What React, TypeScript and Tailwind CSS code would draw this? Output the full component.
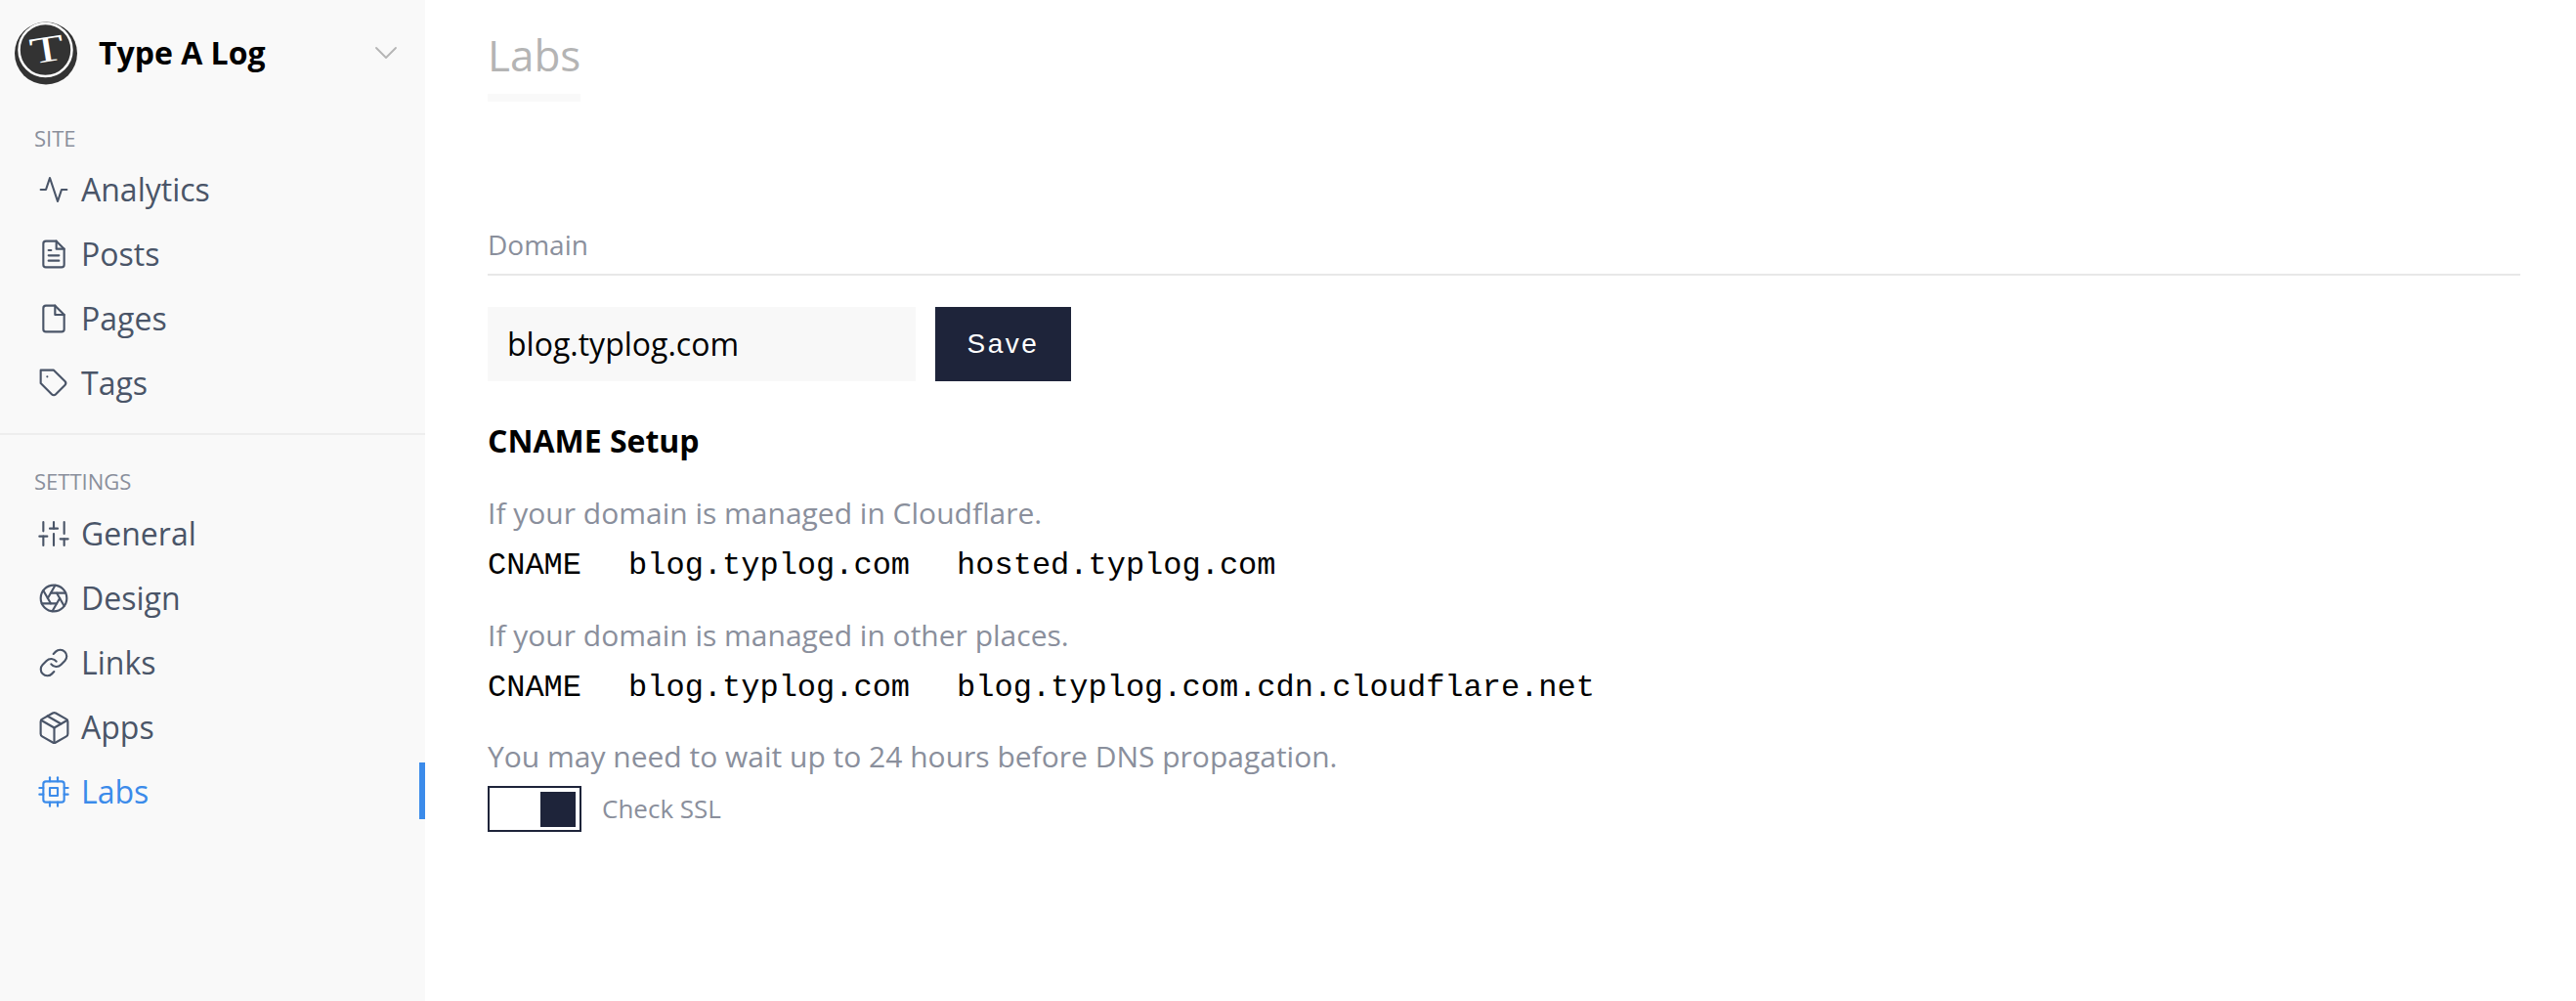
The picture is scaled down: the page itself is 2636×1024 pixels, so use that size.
import type { IconType } from 'react-icons';
import {
  FiActivity,
  FiAperture,
  FiChevronDown,
  FiCpu,
  FiFile,
  FiFileText,
  FiLink,
  FiPackage,
  FiSliders,
  FiTag,
} from 'react-icons/fi';

type NavEntry = { label: string; icon: IconType; active?: boolean };

// the package glyph sits small in its box, so it gets drawn a bit larger than the others
const AppsIcon: IconType = (props) => (
  <FiPackage {...props} size={37} strokeWidth={1.4} className="-mx-[2.5px] shrink-0" />
);

const siteLinks: NavEntry[] = [
  { label: 'Analytics', icon: FiActivity },
  { label: 'Posts', icon: FiFileText },
  { label: 'Pages', icon: FiFile },
  { label: 'Tags', icon: FiTag },
];

const settingsLinks: NavEntry[] = [
  { label: 'General', icon: FiSliders },
  { label: 'Design', icon: FiAperture },
  { label: 'Links', icon: FiLink },
  { label: 'Apps', icon: AppsIcon },
  { label: 'Labs', icon: FiCpu, active: true },
];

function Logo() {
  return (
    <svg width="66" height="66" viewBox="0 0 66 66" className="shrink-0">
      <circle cx="32" cy="33.5" r="32" fill="#333333" />
      <circle cx="31.5" cy="30" r="27" fill="none" stroke="#ffffff" strokeWidth="2.5" />
      <text
        x="0"
        y="12.5"
        textAnchor="middle"
        fill="#ffffff"
        fontSize="38"
        fontFamily="'Liberation Serif', serif"
        transform="translate(33 29.5) rotate(-9) scale(1.5 1)"
      >
        T
      </text>
    </svg>
  );
}

function NavRow({ label, icon: Icon, active }: NavEntry) {
  return (
    <a
      className={`relative flex h-[66px] items-center gap-[12px] pl-[39px] text-[32px] ${
        active ? 'text-[#3b8bea]' : 'text-[#4a5568]'
      }`}
    >
      <Icon size={32} strokeWidth={1.6} className="shrink-0" />
      <span>{label}</span>
      {active && <span className="absolute right-0 top-[3px] h-[58px] w-[6px] bg-[#3b8bea]" />}
    </a>
  );
}

function Sidebar() {
  return (
    <aside className="flex h-full w-[435px] shrink-0 flex-col bg-[#f9f9f9]">
      <div className="flex h-[107px] items-center pl-[15px] pr-[20px]">
        <Logo />
        <span className="ml-[20px] text-[32px] font-bold text-black">Type A Log</span>
        <FiChevronDown size={40} strokeWidth={1.1} className="ml-auto text-[#b5b5b5]" />
      </div>
      <div className="border-b-2 border-[#eeeeee] pb-[18px]">
        <h4 className="mb-[5px] mt-[19px] pl-[35px] text-[22px] leading-[30px] text-[#8a8f9c]">SITE</h4>
        {siteLinks.map((link) => (
          <NavRow key={link.label} {...link} />
        ))}
      </div>
      <div>
        <h4 className="mb-[6px] mt-[32px] pl-[35px] text-[22px] leading-[30px] text-[#8a8f9c]">SETTINGS</h4>
        {settingsLinks.map((link) => (
          <NavRow key={link.label} {...link} />
        ))}
      </div>
    </aside>
  );
}

function CnameRow({ target }: { target: string }) {
  return (
    <div className="mt-[10px] flex gap-[48px] font-['Liberation_Mono',monospace] text-[32px] leading-[44px] text-black">
      <span>CNAME</span>
      <span>blog.typlog.com</span>
      <span>{target}</span>
    </div>
  );
}

export default function App() {
  return (
    <div className="flex h-screen w-full overflow-hidden bg-white font-['Open_Sans',sans-serif]">
      <Sidebar />
      <main className="flex-1 pl-[64px] pr-[57px]">
        <h1 className="inline-block h-[104px] border-b-[8px] border-[#f9f9f9] pt-[26px] text-[44px] leading-[60px] text-[#b4b4b4]">
          Labs
        </h1>
        <h2 className="mt-[128px] border-b-2 border-[#e8e8e8] pb-[12px] text-[28px] leading-[36px] text-[#8a8f9c]">
          Domain
        </h2>
        <div className="mt-[32px] flex gap-[20px]">
          <div className="flex h-[76px] w-[438px] items-center bg-[#f8f8f8] px-[20px] text-[32px] text-black">
            blog.typlog.com
          </div>
          <button className="h-[76px] w-[139px] bg-[#1e243a] font-['Liberation_Sans',sans-serif] text-[28px] tracking-[2.5px] text-white">
            Save
          </button>
        </div>
        <h3 className="mt-[39px] text-[32px] font-bold leading-[44px] text-black">CNAME Setup</h3>
        <p className="mt-[30px] text-[30px] leading-[44px] text-[#8a8f9c]">If your domain is managed in Cloudflare.</p>
        <CnameRow target="hosted.typlog.com" />
        <p className="mt-[27px] text-[30px] leading-[44px] text-[#8a8f9c]">If your domain is managed in other places.</p>
        <CnameRow target="blog.typlog.com.cdn.cloudflare.net" />
        <p className="mt-[26px] text-[30px] leading-[44px] text-[#8a8f9c]">
          You may need to wait up to 24 hours before DNS propagation.
        </p>
        <div className="mt-[8px] flex items-center gap-[21px]">
          <div className="flex h-[47px] w-[96px] items-center justify-end border-2 border-[#1e243a] pr-[4px]">
            <div className="h-[36px] w-[36px] bg-[#1e243a]" />
          </div>
          <span className="text-[26px] text-[#8a8f9c]">Check SSL</span>
        </div>
      </main>
    </div>
  );
}
